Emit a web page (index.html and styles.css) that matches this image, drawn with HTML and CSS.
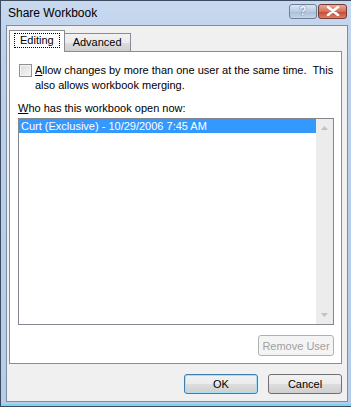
FILE: index.html
```html
<html>
<head>
<link rel="stylesheet" href="styles.css">
</head>
<body>

<div class="window">
<div class="titlebar">
<span class="title">Share Workbook</span>
<div class="caption-btns">
<div class="cap-btn help">?</div>
<div class="cap-btn close">
<svg width="14" height="10" viewBox="0 0 14 10"><path d="M2 1 L12 9 M12 1 L2 9" stroke="#fff" stroke-width="2.6" stroke-linecap="round"/></svg>
</div>
</div>
</div>

<div class="client">
<div class="tabs">
<div class="tab active"><span class="focus">Editing</span></div>
<div class="tab">Advanced</div>
</div>

<div class="panel">
<label class="option">
<span class="checkbox"></span>
<span class="option-text"><u>A</u>llow changes by more than one user at the same time.&nbsp; This<br>also allows workbook merging.</span>
</label>

<div class="list-label"><u>W</u>ho has this workbook open now:</div>
<div class="listbox">
<div class="list-items">
<div class="item selected">Curt (Exclusive) - 10/29/2006 7:45 AM</div>
</div>
<div class="scrollbar">
<svg width="7" height="4" viewBox="0 0 7 4"><path d="M0 4 L3.5 0 L7 4 Z" fill="#c2c2c2"/></svg>
<svg width="7" height="4" viewBox="0 0 7 4"><path d="M0 0 L3.5 4 L7 0 Z" fill="#c2c2c2"/></svg>
</div>
</div>
<div class="panel-actions">
<button class="btn" disabled>Remove User</button>
</div>
</div>

<div class="dialog-actions">
<button class="btn default">OK</button>
<button class="btn">Cancel</button>
</div>
</div>
</div>

</body>
</html>
```

FILE: styles.css
```css
body {
margin: 0;
font-family: 'Liberation Sans', Arial, sans-serif;
font-size: 11px;
color: #000;
background-color: #ffffff;
}
.window {
width: 351px;
height: 407px;
box-sizing: border-box;
border: 1px solid #3d4c60;
border-right: 0;
background: linear-gradient(#c8d9ef, #bcd0ea 60px, #b6cce8);
display: flex;
flex-direction: column;
padding: 0 3px 4px 5px;
box-shadow: inset 0 -2px 0 #7fd4ee;
}
.titlebar {
height: 24px;
display: flex;
align-items: center;
justify-content: space-between;
padding-left: 2px;
}
.title {
font-size: 12px;
color: #000;
}
.caption-btns {
display: flex;
gap: 1px;
margin-top: -4px;
margin-right: 1px;
}
.cap-btn {
width: 28px;
height: 15px;
box-sizing: border-box;
border: 1px solid #6d7f96;
border-radius: 3px;
display: flex;
align-items: center;
justify-content: center;
}
.help {
background: linear-gradient(#dbe6f3, #b9cbe2 50%, #a8bdd8 51%, #c4d5ea);
color: #fff;
font-weight: bold;
font-size: 12px;
text-shadow: 0 0 1px #4a5e78, 0 0 1px #4a5e78;
}
.close {
width: 29px;
border-color: #7a3b30;
background: linear-gradient(#e9a99c, #d4705c 50%, #c4462e 51%, #d6826c);
}
.client {
flex: 1;
background-color: #f0f0f0;
border: 1px solid #7d8ea4;
padding: 4px 5px 0 2px;
display: flex;
flex-direction: column;
}
.tabs {
display: flex;
align-items: flex-end;
height: 21px;
position: relative;
z-index: 1;
}
.tab {
height: 18px;
box-sizing: border-box;
padding: 2px 8px 0 8px;
border: 1px solid #898c95;
border-bottom: 0;
background: linear-gradient(#f2f2f2, #ebebeb 50%, #dddddd 51%, #cfcfcf);
}
.tab.active {
padding: 2px 4px 0 4px;
background: #ffffff;
margin-right: -1px;
margin-bottom: -1px;
height: 22px;
}
.focus {
display: inline-block;
border: 1px dotted #000;
padding: 0 5px 1px 5px;
}
.panel {
height: 313px;
box-sizing: border-box;
border: 1px solid #898c95;
background: #ffffff;
padding: 11px 7px 0 8px;
display: flex;
flex-direction: column;
}
.option {
display: flex;
align-items: flex-start;
gap: 3px;
margin-left: 1px;
}
.checkbox {
width: 13px;
height: 13px;
flex: none;
box-sizing: border-box;
border: 1px solid #8e8f8f;
background: linear-gradient(135deg, #dcdcdc, #f6f6f6);
box-shadow: inset 0 0 0 1px #f4f4f4;
margin-top: 1px;
}
.option-text {
flex: none;
line-height: 15px;
white-space: nowrap;
}
.list-label {
margin-top: 8px;
line-height: 15px;
}
.listbox {
margin-top: 2px;
height: 207px;
box-sizing: border-box;
border: 1px solid #828790;
display: flex;
}
.list-items {
flex: 1;
}
.item {
height: 14px;
line-height: 14px;
padding-left: 2px;
}
.selected {
background: #3399ff;
color: #ffffff;
}
.scrollbar {
width: 17px;
background: #ececec;
display: flex;
flex-direction: column;
justify-content: space-between;
align-items: center;
padding: 7px 0 7px 0;
}
.panel-actions {
display: flex;
justify-content: flex-end;
margin-top: 10px;
}
.btn {
font-family: 'Liberation Sans', Arial, sans-serif;
font-size: 11px;
width: 74px;
height: 20px;
box-sizing: border-box;
border: 1px solid #707070;
border-radius: 3px;
background: linear-gradient(#f2f2f2, #ebebeb 50%, #dddddd 51%, #cfcfcf);
color: #000;
padding: 0;
}
.btn:disabled {
width: 76px;
height: 21px;
border-color: #adb2b5;
background: #f4f4f4;
color: #a0a0a0;
}
.btn.default {
border-color: #3c7fb1;
box-shadow: inset 0 0 0 1px #a6e0f6;
}
.dialog-actions {
display: flex;
justify-content: flex-end;
gap: 10px;
margin-top: 10px;
}
```
